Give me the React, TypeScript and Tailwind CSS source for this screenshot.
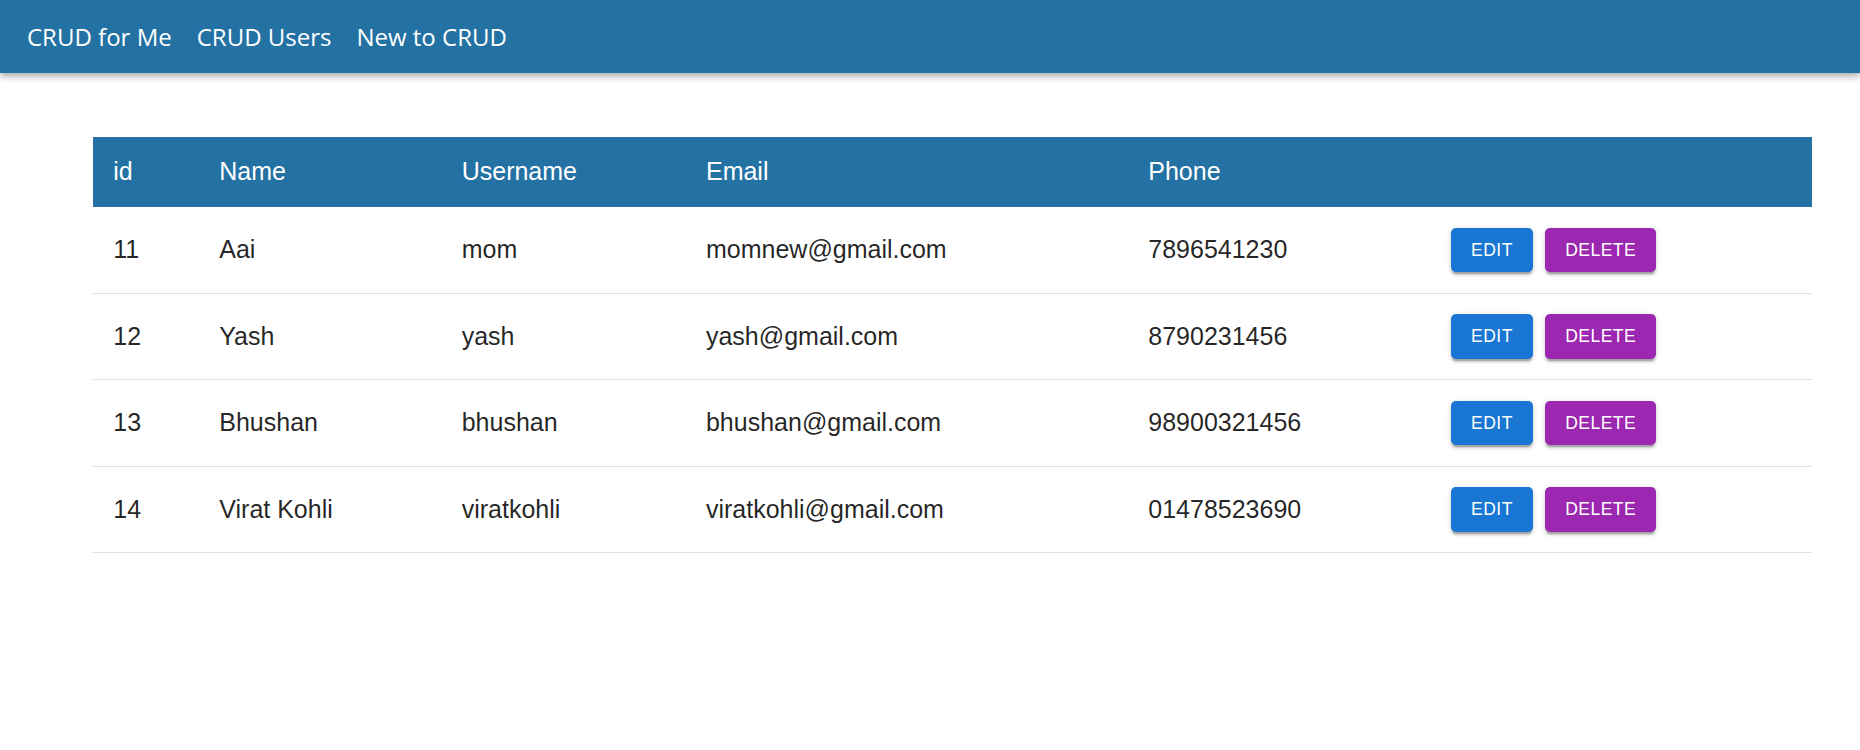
import React from "react";

const rows = [
  { id: 11, name: "Aai", username: "mom", email: "momnew@gmail.com", phone: "7896541230" },
  { id: 12, name: "Yash", username: "yash", email: "yash@gmail.com", phone: "8790231456" },
  { id: 13, name: "Bhushan", username: "bhushan", email: "bhushan@gmail.com", phone: "98900321456" },
  { id: 14, name: "Virat Kohli", username: "viratkohli", email: "viratkohli@gmail.com", phone: "01478523690" },
];

const cols = "grid grid-cols-[106.6px_242.4px_244.3px_442.3px_302.7px_1fr]";

export default function App() {
  return (
    <div className="min-h-[750px] w-full bg-white">
      <header className="h-[73px] bg-[#2471a3] flex items-center pl-[27px] gap-[25px] shadow-[0px_2.5px_5px_-1.25px_rgba(0,0,0,0.2),0px_5px_6px_0px_rgba(0,0,0,0.14),0px_1.25px_12px_0px_rgba(0,0,0,0.12)] relative z-10">
        {["CRUD for Me", "CRUD Users", "New to CRUD"].map((t) => (
          <a key={t} className="text-white text-[24px] font-['Open_Sans',sans-serif] leading-none cursor-pointer">
            {t}
          </a>
        ))}
      </header>
      <div className="mt-[64px] ml-[92.7px] mr-[48.3px] font-['Liberation_Sans',Arial,sans-serif] text-[25px]">
        <div className={`${cols} h-[70px] items-center bg-[#2471a3] text-white`}>
          <div className="px-[20.6px]">id</div>
          <div className="px-[20px]">Name</div>
          <div className="px-[20px]">Username</div>
          <div className="px-[20px]">Email</div>
          <div className="px-[20px]">Phone</div>
          <div className="px-[20px]"></div>
        </div>
        {rows.map((r) => (
          <div key={r.id} className={`${cols} h-[86.6px] items-center border-b border-[#e0e0e0] text-[rgba(0,0,0,0.87)]`}>
            <div className="px-[20.6px]">{r.id}</div>
            <div className="px-[20px]">{r.name}</div>
            <div className="px-[20px]">{r.username}</div>
            <div className="px-[20px]">{r.email}</div>
            <div className="px-[20px]">{r.phone}</div>
            <div className="px-[20px] flex items-center gap-[12.3px]">
              <button className="h-[44.5px] px-[20px] rounded-[5px] bg-[#1976d2] text-white text-[17.5px] tracking-[0.5px] uppercase shadow-[0px_3.75px_1.25px_-2.5px_rgba(0,0,0,0.2),0px_2.5px_2.5px_0px_rgba(0,0,0,0.14),0px_1.25px_6.25px_0px_rgba(0,0,0,0.12)]">
                Edit
              </button>
              <button className="h-[44.5px] px-[20px] rounded-[5px] bg-[#9c27b0] text-white text-[17.5px] tracking-[0.5px] uppercase shadow-[0px_3.75px_1.25px_-2.5px_rgba(0,0,0,0.2),0px_2.5px_2.5px_0px_rgba(0,0,0,0.14),0px_1.25px_6.25px_0px_rgba(0,0,0,0.12)]">
                Delete
              </button>
            </div>
          </div>
        ))}
      </div>
    </div>
  );
}
